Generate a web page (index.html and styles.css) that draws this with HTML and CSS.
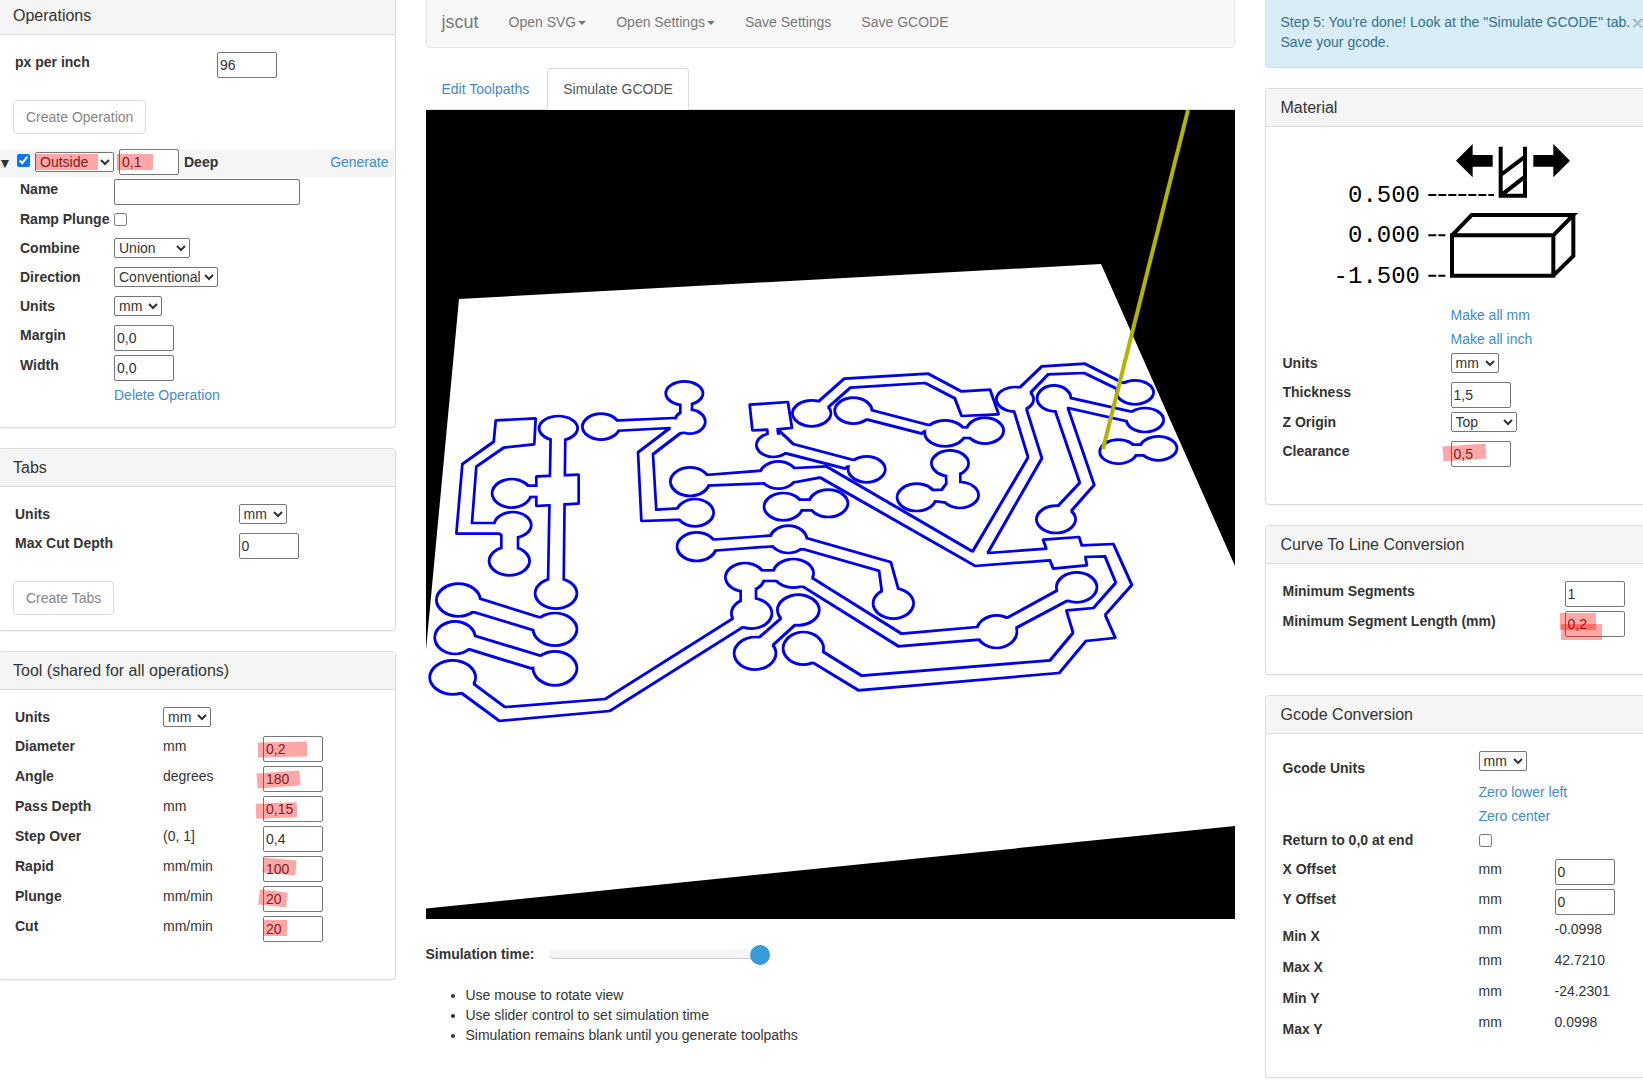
FILE: index.html
```html
<!DOCTYPE html>
<html lang="en">
<head>
<meta charset="utf-8">
<title>jscut</title>
<link rel="stylesheet" href="styles.css">
</head>
<body>
<div class="page">

<aside class="col">
  <section class="panel">
    <h3 class="panel-h">Operations</h3>
    <div class="panel-b pb-22">
      <div class="row"><b class="lbl w-202">px per inch</b><input class="in" value="96"></div>
      <button class="btn btn-top" disabled>Create Operation</button>
      <div class="op-row">
        <span class="tri">▼</span>
        <input type="checkbox" class="op-check" checked>
        <span class="mk op-sel-wrap"><select class="sel w-79"><option>Outside</option></select><i class="hl hl-outside"></i></span>
        <span class="mk op-in-wrap"><input class="in" value="0,1"><i class="hl hl-deep"></i></span>
        <b class="op-deep">Deep</b>
        <a class="link op-gen">Generate</a>
      </div>
      <div class="op-fields">
        <div class="row g4"><b class="lbl w-94">Name</b><input class="in w-186"></div>
        <div class="row g9"><b class="lbl w-94">Ramp Plunge</b><input type="checkbox" class="chk"></div>
        <div class="row g9"><b class="lbl w-94">Combine</b><select class="sel w-76"><option>Union</option></select></div>
        <div class="row g9"><b class="lbl w-94">Direction</b><select class="sel w-104"><option>Conventional</option></select></div>
        <div class="row g9"><b class="lbl w-94">Units</b><select class="sel w-48"><option>mm</option></select></div>
        <div class="row g4"><b class="lbl w-94">Margin</b><input class="in" value="0,0"></div>
        <div class="row g4"><b class="lbl w-94">Width</b><input class="in" value="0,0"></div>
        <div class="row"><span class="lbl w-94"></span><a class="link">Delete Operation</a></div>
      </div>
    </div>
  </section>

  <section class="panel">
    <h3 class="panel-h">Tabs</h3>
    <div class="panel-b">
      <div class="row g9"><b class="lbl w-224">Units</b><select class="sel w-48"><option>mm</option></select></div>
      <div class="row"><b class="lbl w-224">Max Cut Depth</b><input class="in" value="0"></div>
      <button class="btn btn-top" disabled>Create Tabs</button>
    </div>
  </section>

  <section class="panel">
    <h3 class="panel-h">Tool (shared for all operations)</h3>
    <div class="panel-b pb-37">
      <div class="row g9"><b class="lbl w-148">Units</b><select class="sel w-48"><option>mm</option></select></div>
      <div class="row g4"><b class="lbl w-148">Diameter</b><span class="w-100">mm</span><span class="mk"><input class="in" value="0,2"><i class="hl hl-dia"></i></span></div>
      <div class="row g4"><b class="lbl w-148">Angle</b><span class="w-100">degrees</span><span class="mk"><input class="in" value="180"><i class="hl hl-angle"></i></span></div>
      <div class="row g4"><b class="lbl w-148">Pass Depth</b><span class="w-100">mm</span><span class="mk"><input class="in" value="0,15"><i class="hl hl-pass"></i></span></div>
      <div class="row g4"><b class="lbl w-148">Step Over</b><span class="w-100">(0, 1]</span><input class="in" value="0,4"></div>
      <div class="row g4"><b class="lbl w-148">Rapid</b><span class="w-100">mm/min</span><span class="mk"><input class="in" value="100"><i class="hl hl-rapid"></i></span></div>
      <div class="row g4"><b class="lbl w-148">Plunge</b><span class="w-100">mm/min</span><span class="mk"><input class="in" value="20"><i class="hl hl-plunge"></i></span></div>
      <div class="row"><b class="lbl w-148">Cut</b><span class="w-100">mm/min</span><span class="mk"><input class="in" value="20"><i class="hl hl-cut"></i></span></div>
    </div>
  </section>
</aside>

<main class="col">
  <nav class="navbar">
    <a class="brand">jscut</a>
    <a class="nav-link">Open SVG<span class="caret"></span></a>
    <a class="nav-link">Open Settings<span class="caret"></span></a>
    <a class="nav-link">Save Settings</a>
    <a class="nav-link">Save GCODE</a>
  </nav>
  <div class="tabs">
    <a class="tab link">Edit Toolpaths</a>
    <a class="tab tab-active">Simulate GCODE</a>
  </div>
  <svg class="sim" viewBox="426 110 809 809" xmlns="http://www.w3.org/2000/svg">
    <defs>
      <filter id="shrink" filterUnits="userSpaceOnUse" x="426" y="110" width="809" height="809" color-interpolation-filters="sRGB">
        <feMorphology operator="erode" radius="1"/>
      </filter>
      <g id="pcb">
        <g transform="translate(420 360) scale(.33333)">
          <path d="M228 182L346 176 342 252 252 262 168 320 155 490 240 490 240 520 110 520 128 312 222 245Z"/>
          <path d="M245 510H293V580H245Z"/>
          <ellipse cx="278" cy="495" rx="55" ry="38"/>
          <ellipse cx="268" cy="603" rx="60" ry="42"/>
          <path d="M393 225H435L430 675H385Z"/>
          <path d="M350 350L475 345 475 430 350 437Z"/>
          <path d="M320 378H365V410H320Z"/>
          <ellipse cx="415" cy="205" rx="57" ry="36"/>
          <ellipse cx="275" cy="400" rx="58" ry="42"/>
          <ellipse cx="408" cy="700" rx="62" ry="45"/>
          <ellipse cx="543" cy="200" rx="55" ry="38"/>
          <path d="M580 183L760 175 800 180 800 215 780 220 698 283 708 450 790 445 790 478 665 482 655 277 752 203 580 212Z"/>
          <ellipse cx="810" cy="185" rx="45" ry="35"/>
          <ellipse cx="793" cy="100" rx="55" ry="35"/>
          <path d="M782 120H815V170H782Z"/>
          <ellipse cx="825" cy="458" rx="55" ry="40"/>
          <ellipse cx="115" cy="720" rx="65" ry="48"/>
          <ellipse cx="405" cy="808" rx="65" ry="48"/>
          <path d="M165 712L385 781 340 810 140 749Z"/>
          <ellipse cx="105" cy="833" rx="60" ry="48"/>
          <ellipse cx="405" cy="925" rx="65" ry="50"/>
          <path d="M155 825L385 895 335 925 140 865Z"/>
          <ellipse cx="98" cy="952" rx="68" ry="50"/>
          <path d="M145 960L255 1042 555 1018 945 772 970 800 570 1052 238 1082 110 988Z"/>
        </g>
        <g transform="translate(640 360) scale(.33333)">
          <ellipse cx="315" cy="652" rx="58" ry="42"/>
          <ellipse cx="460" cy="640" rx="60" ry="42"/>
          <ellipse cx="335" cy="760" rx="60" ry="45"/>
          <path d="M360 632H430V662H360Z"/>
          <path d="M303 680H347V740H303Z"/>
          <path d="M518 655L785 822 1010 802 1070 790 1100 775 1255 690 1285 720 1125 805 1070 830 1020 838 775 858 490 680 430 670 Z"/>
          <ellipse cx="1070" cy="815" rx="60" ry="48"/>
          <ellipse cx="475" cy="750" rx="62" ry="45"/>
          <ellipse cx="345" cy="880" rx="62" ry="48"/>
          <path d="M435 765L355 835 388 865 470 790Z"/>
          <path d="M330 135L443 127 455 203 412 207 415 230 385 230 382 208 338 210Z"/>
          <ellipse cx="400" cy="255" rx="50" ry="35"/>
          <path d="M420 215L460 253 650 303 615 325 440 280 400 270Z"/>
          <ellipse cx="680" cy="328" rx="55" ry="38"/>
          <ellipse cx="515" cy="160" rx="57" ry="38"/>
          <path d="M525 134L612 57 865 42 965 95 1050 90 1075 162 965 167 945 115 855 68 632 82 555 150Z"/>
          <ellipse cx="640" cy="152" rx="55" ry="38"/>
          <ellipse cx="915" cy="220" rx="60" ry="38"/>
          <ellipse cx="1035" cy="212" rx="55" ry="38"/>
          <path d="M680 147L875 198 845 220 670 175Z"/>
          <path d="M940 203H1000V233H940Z"/>
          <ellipse cx="930" cy="310" rx="55" ry="38"/>
          <ellipse cx="830" cy="412" rx="58" ry="40"/>
          <ellipse cx="960" cy="405" rx="55" ry="38"/>
          <path d="M918 330H960V375L985 400 940 430 880 422 860 392 905 390 920 370Z"/>
          <ellipse cx="430" cy="440" rx="57" ry="40"/>
          <ellipse cx="565" cy="430" rx="58" ry="40"/>
          <path d="M460 420H530V450H460Z"/>
          <ellipse cx="170" cy="560" rx="58" ry="42"/>
          <ellipse cx="445" cy="538" rx="55" ry="40"/>
          <ellipse cx="760" cy="730" rx="60" ry="45"/>
          <path d="M200 541L400 527 500 535 752 607 778 700 727 700 718 632 490 567 440 560 400 558 210 572Z"/>
        </g>
        <g transform="translate(780 350) scale(.33333)">
          <path d="M700 175L745 322 578 605 140 350 45 355-225 376-220 406 50 395 120 382 585 647 810 630 820 655 920 645 915 620 975 618 1008 698 940 775 860 782 880 848 810 932 245 978 120 900 90 932 235 1020 838 968 918 872 1005 863 975 795 1055 705 1000 583 905 587 897 562 790 570 800 597 622 610 785 325 738 175Z"/>
          <ellipse cx="-5" cy="375" rx="55" ry="40"/>
          <ellipse cx="-270" cy="395" rx="58" ry="42"/>
          <ellipse cx="70" cy="895" rx="60" ry="48"/>
          <ellipse cx="705" cy="148" rx="55" ry="36"/>
          <path d="M710 122L785 50 915 42 1040 105 1030 125 912 68 805 72 735 145Z"/>
          <ellipse cx="890" cy="712" rx="60" ry="44"/>
          <ellipse cx="1065" cy="127" rx="55" ry="35"/>
          <ellipse cx="822" cy="145" rx="50" ry="38"/>
          <ellipse cx="828" cy="508" rx="58" ry="40"/>
          <ellipse cx="1095" cy="210" rx="55" ry="35"/>
          <path d="M820 165L900 398 825 478 858 500 942 405 860 165Z"/>
          <path d="M865 143L1060 187 1050 215 850 170Z"/>
          <ellipse cx="1015" cy="305" rx="55" ry="35"/>
          <ellipse cx="1135" cy="295" rx="55" ry="35"/>
          <path d="M1040 285H1100V315H1040Z"/>
        </g>
      </g>
    </defs>
    <rect class="sim-bg" x="426" y="110" width="809" height="809"/>
    <polygon class="sim-board" points="459,299 1101,264 1235,566 1235,826 426,908.5 426,650"/>
    <use href="#pcb" class="pcb-ink"/>
    <use href="#pcb" class="pcb-fill"/>
    <line class="sim-tool" x1="1188" y1="110" x2="1103" y2="449"/>
  </svg>
  <div class="sim-control">
    <b>Simulation time:</b>
    <div class="slider"><span class="thumb"></span></div>
  </div>
  <ul class="notes">
    <li>Use mouse to rotate view</li>
    <li>Use slider control to set simulation time</li>
    <li>Simulation remains blank until you generate toolpaths</li>
  </ul>
</main>

<aside class="col">
  <div class="alert">Step 5: You're done! Look at the "Simulate GCODE" tab.<br>Save your gcode.<span class="close">×</span></div>

  <section class="panel">
    <h3 class="panel-h">Material</h3>
    <div class="panel-b pb-37 mat-b">
      <svg class="mat-svg" viewBox="99 408 900 507" xmlns="http://www.w3.org/2000/svg">
        <text class="mat-t" x="510" y="605">0.500</text>
        <text class="mat-t" x="510" y="725">0.000</text>
        <text class="mat-t" x="510" y="849">-1.500</text>
        <line class="mat-dash" x1="535" y1="585" x2="732" y2="585"/>
        <line class="mat-dash" x1="535" y1="706" x2="586" y2="706"/>
        <line class="mat-dash" x1="535" y1="827" x2="586" y2="827"/>
        <path class="mat-s" d="M752 440V587H825V440M752 525L825 470M752 587L825 530"/>
        <path class="mat-f" d="M618 482L668 432V465H728V500H668V532Z"/>
        <path class="mat-f" d="M960 482L910 432V465H850V500H910V532Z"/>
        <path class="mat-s" d="M606 706H910V827H606ZM606 706L665 645H970L910 706M970 645V768L910 827"/>
      </svg>
      <div class="row g4"><span class="lbl w-168"></span><a class="link">Make all mm</a></div>
      <div class="row g4"><span class="lbl w-168"></span><a class="link">Make all inch</a></div>
      <div class="row g9"><b class="lbl w-168">Units</b><select class="sel w-48"><option>mm</option></select></div>
      <div class="row g4"><b class="lbl w-168">Thickness</b><input class="in" value="1,5"></div>
      <div class="row g9"><b class="lbl w-168">Z Origin</b><select class="sel w-66"><option>Top</option></select></div>
      <div class="row"><b class="lbl w-168">Clearance</b><span class="mk"><input class="in" value="0,5"><i class="hl hl-clear"></i></span></div>
    </div>
  </section>

  <section class="panel">
    <h3 class="panel-h">Curve To Line Conversion</h3>
    <div class="panel-b pb-37">
      <div class="row g4"><b class="lbl w-282">Minimum Segments</b><input class="in" value="1"></div>
      <div class="row"><b class="lbl w-282">Minimum Segment Length (mm)</b><span class="mk"><input class="in" value="0,2"><i class="hl hl-seg-a"></i><i class="hl hl-seg-b"></i></span></div>
    </div>
  </section>

  <section class="panel">
    <h3 class="panel-h">Gcode Conversion</h3>
    <div class="panel-b gc-b">
      <div class="row g4">
        <b class="lbl w-196 gc-low">Gcode Units</b>
        <div class="gc-links">
          <select class="sel w-48 gc-sel"><option>mm</option></select>
          <a class="link gc-link">Zero lower left</a>
          <a class="link gc-link">Zero center</a>
        </div>
      </div>
      <div class="row g9"><b class="lbl w-196">Return to 0,0 at end</b><input type="checkbox" class="chk"></div>
      <div class="row g4"><b class="lbl w-196">X Offset</b><span class="w-76">mm</span><input class="in" value="0"></div>
      <div class="row g4"><b class="lbl w-196">Y Offset</b><span class="w-76">mm</span><input class="in" value="0"></div>
      <div class="row gc-stat"><b class="lbl w-196 gc-low">Min X</b><span class="w-76">mm</span><span>-0.0998</span></div>
      <div class="row gc-stat"><b class="lbl w-196 gc-low">Max X</b><span class="w-76">mm</span><span>42.7210</span></div>
      <div class="row gc-stat"><b class="lbl w-196 gc-low">Min Y</b><span class="w-76">mm</span><span>-24.2301</span></div>
      <div class="row gc-stat"><b class="lbl w-196 gc-low">Max Y</b><span class="w-76">mm</span><span>0.0998</span></div>
    </div>
  </section>
</aside>

</div>
</body>
</html>
```

FILE: styles.css
```css
* { box-sizing: border-box; }
html, body { margin: 0; height: 1082px; overflow: hidden; background: #fff; }
body { font: 14px/20px "Liberation Sans", Arial, sans-serif; color: #333; }
.page {
  display: grid;
  grid-template-columns: 398.5px 809px 399px;
  column-gap: 30px;
  margin: -4px 0 0 -3px;
  align-items: start;
}
.col { min-width: 0; }
a { cursor: pointer; }
.link { color: #428bca; text-decoration: none; }

.panel {
  border: 1px solid #ddd;
  border-radius: 4px;
  background: #fff;
  box-shadow: 0 1px 1px rgba(0,0,0,.05);
  margin-bottom: 20px;
}
.panel-h {
  margin: 0;
  height: 38px;
  padding: 10px 15px 0;
  font-size: 16px;
  line-height: 18px;
  font-weight: 400;
  background: #f5f5f5;
  border-bottom: 1px solid #ddd;
  border-radius: 3px 3px 0 0;
}
.panel-b { padding: 17px 15px 15px; }
.pb-37 { padding-bottom: 37px; }
.pb-22 { padding-bottom: 22px; }

.row { display: flex; align-items: flex-start; min-height: 20px; }
.g4 { margin-bottom: 4px; }
.g9 { margin-bottom: 9px; }
.lbl { margin-left: 2px; flex: none; }
.w-94 { width: 94px; flex: none; }
.w-100 { width: 100px; flex: none; }
.w-148 { width: 148px; }
.w-168 { width: 168px; flex: none; }
.w-196 { width: 196px; flex: none; }
.w-76 { width: 76px; flex: none; }
.w-202 { width: 202px; }
.w-224 { width: 223.5px; }
.w-282 { width: 282px; }

.in {
  width: 60px;
  height: 26px;
  border: 1px solid #767676;
  border-radius: 2px;
  padding: 1px 2px;
  font: 14px/20px "Liberation Sans", Arial, sans-serif;
  color: #333;
  background: #fff;
  flex: none;
}
.in.w-186 { width: 186px; }
.sel {
  height: 20px;
  border: 1px solid #767676;
  border-radius: 2px;
  padding: 0;
  font: 14px "Liberation Sans", Arial, sans-serif;
  color: #333;
  background-color: #fff;
  flex: none;
}
.sel.w-48 { width: 48px; }
.sel.w-66 { width: 66px; }
.sel.w-76 { width: 76px; }
.sel.w-79 { width: 79px; }
.sel.w-104 { width: 104px; }
.chk { width: 13px; height: 13px; margin: 4px 0 0; flex: none; }

.btn {
  display: block;
  height: 34px;
  padding: 6px 12px;
  border: 1px solid #dcdcdc;
  border-radius: 4px;
  background: #fff;
  color: #858585;
  font: 14px/20px "Liberation Sans", Arial, sans-serif;
}
.btn-top { margin-top: 22px; }

.op-row {
  display: flex;
  align-items: flex-start;
  height: 28px;
  margin: 15px -14px 2px -15px;
  background: #f5f5f5;
}
.tri { width: 19px; font-size: 14px; line-height: 28px; color: #333; flex: none; }
.op-check { width: 13px; height: 13px; margin: 5px 0 0; flex: none; }
.op-sel-wrap { margin: 3px 0 0 5px; }
.op-in-wrap { margin: 0 0 0 5px; }
.op-deep { margin: 3px 0 0 5px; }
.op-gen { margin: 3px 5px 0 auto; }
.op-fields { padding-left: 5px; }

.mk { position: relative; display: inline-block; line-height: 0; flex: none; }
.hl { position: absolute; background: rgba(255,0,0,.35); pointer-events: none; }
.hl-outside { left: 0; top: 2px; width: 63px; height: 16px; }
.hl-deep { left: -2px; top: 5px; width: 36px; height: 16px; }
.hl-dia { left: -5.5px; top: 6px; width: 49px; height: 15px; transform: rotate(-1deg); }
.hl-angle { left: -6px; top: 6px; width: 43px; height: 15px; transform: rotate(-4deg); }
.hl-pass { left: -7.5px; top: 7px; width: 41px; height: 15px; transform: rotate(-2deg); }
.hl-rapid { left: 0; top: 3px; width: 33px; height: 15px; transform: rotate(5deg); }
.hl-plunge { left: -4px; top: 5px; width: 28px; height: 15px; transform: rotate(6deg); }
.hl-cut { left: 0; top: 4px; width: 24px; height: 16px; }
.hl-clear { left: -8px; top: 4px; width: 43px; height: 15px; transform: rotate(-4deg); }
.hl-seg-a { left: -5px; top: 2px; width: 36px; height: 17px; }
.hl-seg-b { left: -4px; top: 13px; width: 41px; height: 16px; }

.navbar {
  display: flex;
  height: 52px;
  margin-bottom: 20px;
  border: 1px solid #e7e7e7;
  border-radius: 4px;
  background: #f8f8f8;
}
.brand { padding: 15px; font-size: 18px; color: #777; }
.nav-link { padding: 15px; color: #777; white-space: nowrap; }
.caret {
  display: inline-block;
  margin-left: 2px;
  vertical-align: middle;
  border-top: 4px solid #777;
  border-left: 4px solid transparent;
  border-right: 4px solid transparent;
}
.tabs { display: flex; height: 42px; border-bottom: 1px solid #ddd; }
.tab {
  height: 42px;
  padding: 10px 15px;
  margin-right: 2px;
  border: 1px solid transparent;
  border-radius: 4px 4px 0 0;
}
.tab-active { background: #fff; border-color: #ddd #ddd #fff; color: #555; }

.sim { display: block; width: 809px; height: 809px; }
.sim-bg { fill: #000; }
.sim-board { fill: #fff; }
.pcb-ink { fill: #0000e8; stroke: #0000e8; stroke-width: 10; stroke-linejoin: round; }
.pcb-fill { fill: #fff; stroke: none; filter: url(#shrink); }
.sim-tool { stroke: #b3b300; stroke-width: 4; }

.sim-control { display: flex; align-items: center; margin-top: 25px; height: 20px; }
.slider {
  position: relative;
  width: 210px;
  height: 10px;
  margin-left: 16px;
  border-radius: 4px;
  background: #f5f5f5;
  box-shadow: inset 0 -1px 1px #ccc;
}
.thumb {
  position: absolute;
  right: -10px;
  top: -4px;
  width: 20px;
  height: 20px;
  border-radius: 50%;
  background: #389bd8;
}
.notes { margin: 21px 0 0; padding-left: 40px; }

.alert {
  position: relative;
  height: 72px;
  margin-bottom: 20px;
  padding: 15px;
  border: 1px solid #bce8f1;
  border-radius: 4px;
  background: #d9edf7;
  color: #31708f;
  white-space: nowrap;
}
.close {
  position: absolute;
  left: 366px;
  top: 16px;
  font-size: 21px;
  font-weight: 700;
  color: #000;
  opacity: .2;
}
.mat-b { padding-top: 9px; }
.mat-svg { display: block; width: 300px; height: 169px; margin: 0 0 0 2px; }
.mat-t { font: 72px "Liberation Mono", monospace; text-anchor: end; fill: #000; }
.mat-dash { stroke: #000; stroke-width: 6; stroke-dasharray: 24 6; }
.mat-s { fill: none; stroke: #000; stroke-width: 12; }
.mat-f { fill: #000; }

.gc-low { margin-top: 7px; }
.gc-links { display: flex; flex-direction: column; align-items: flex-start; }
.gc-sel { margin-bottom: 11px; }
.gc-link { margin-bottom: 4px; }
.gc-links .gc-link:last-child { margin-bottom: 0; }
.gc-stat { height: 31px; }
.gc-b { padding-bottom: 34px; }
```
